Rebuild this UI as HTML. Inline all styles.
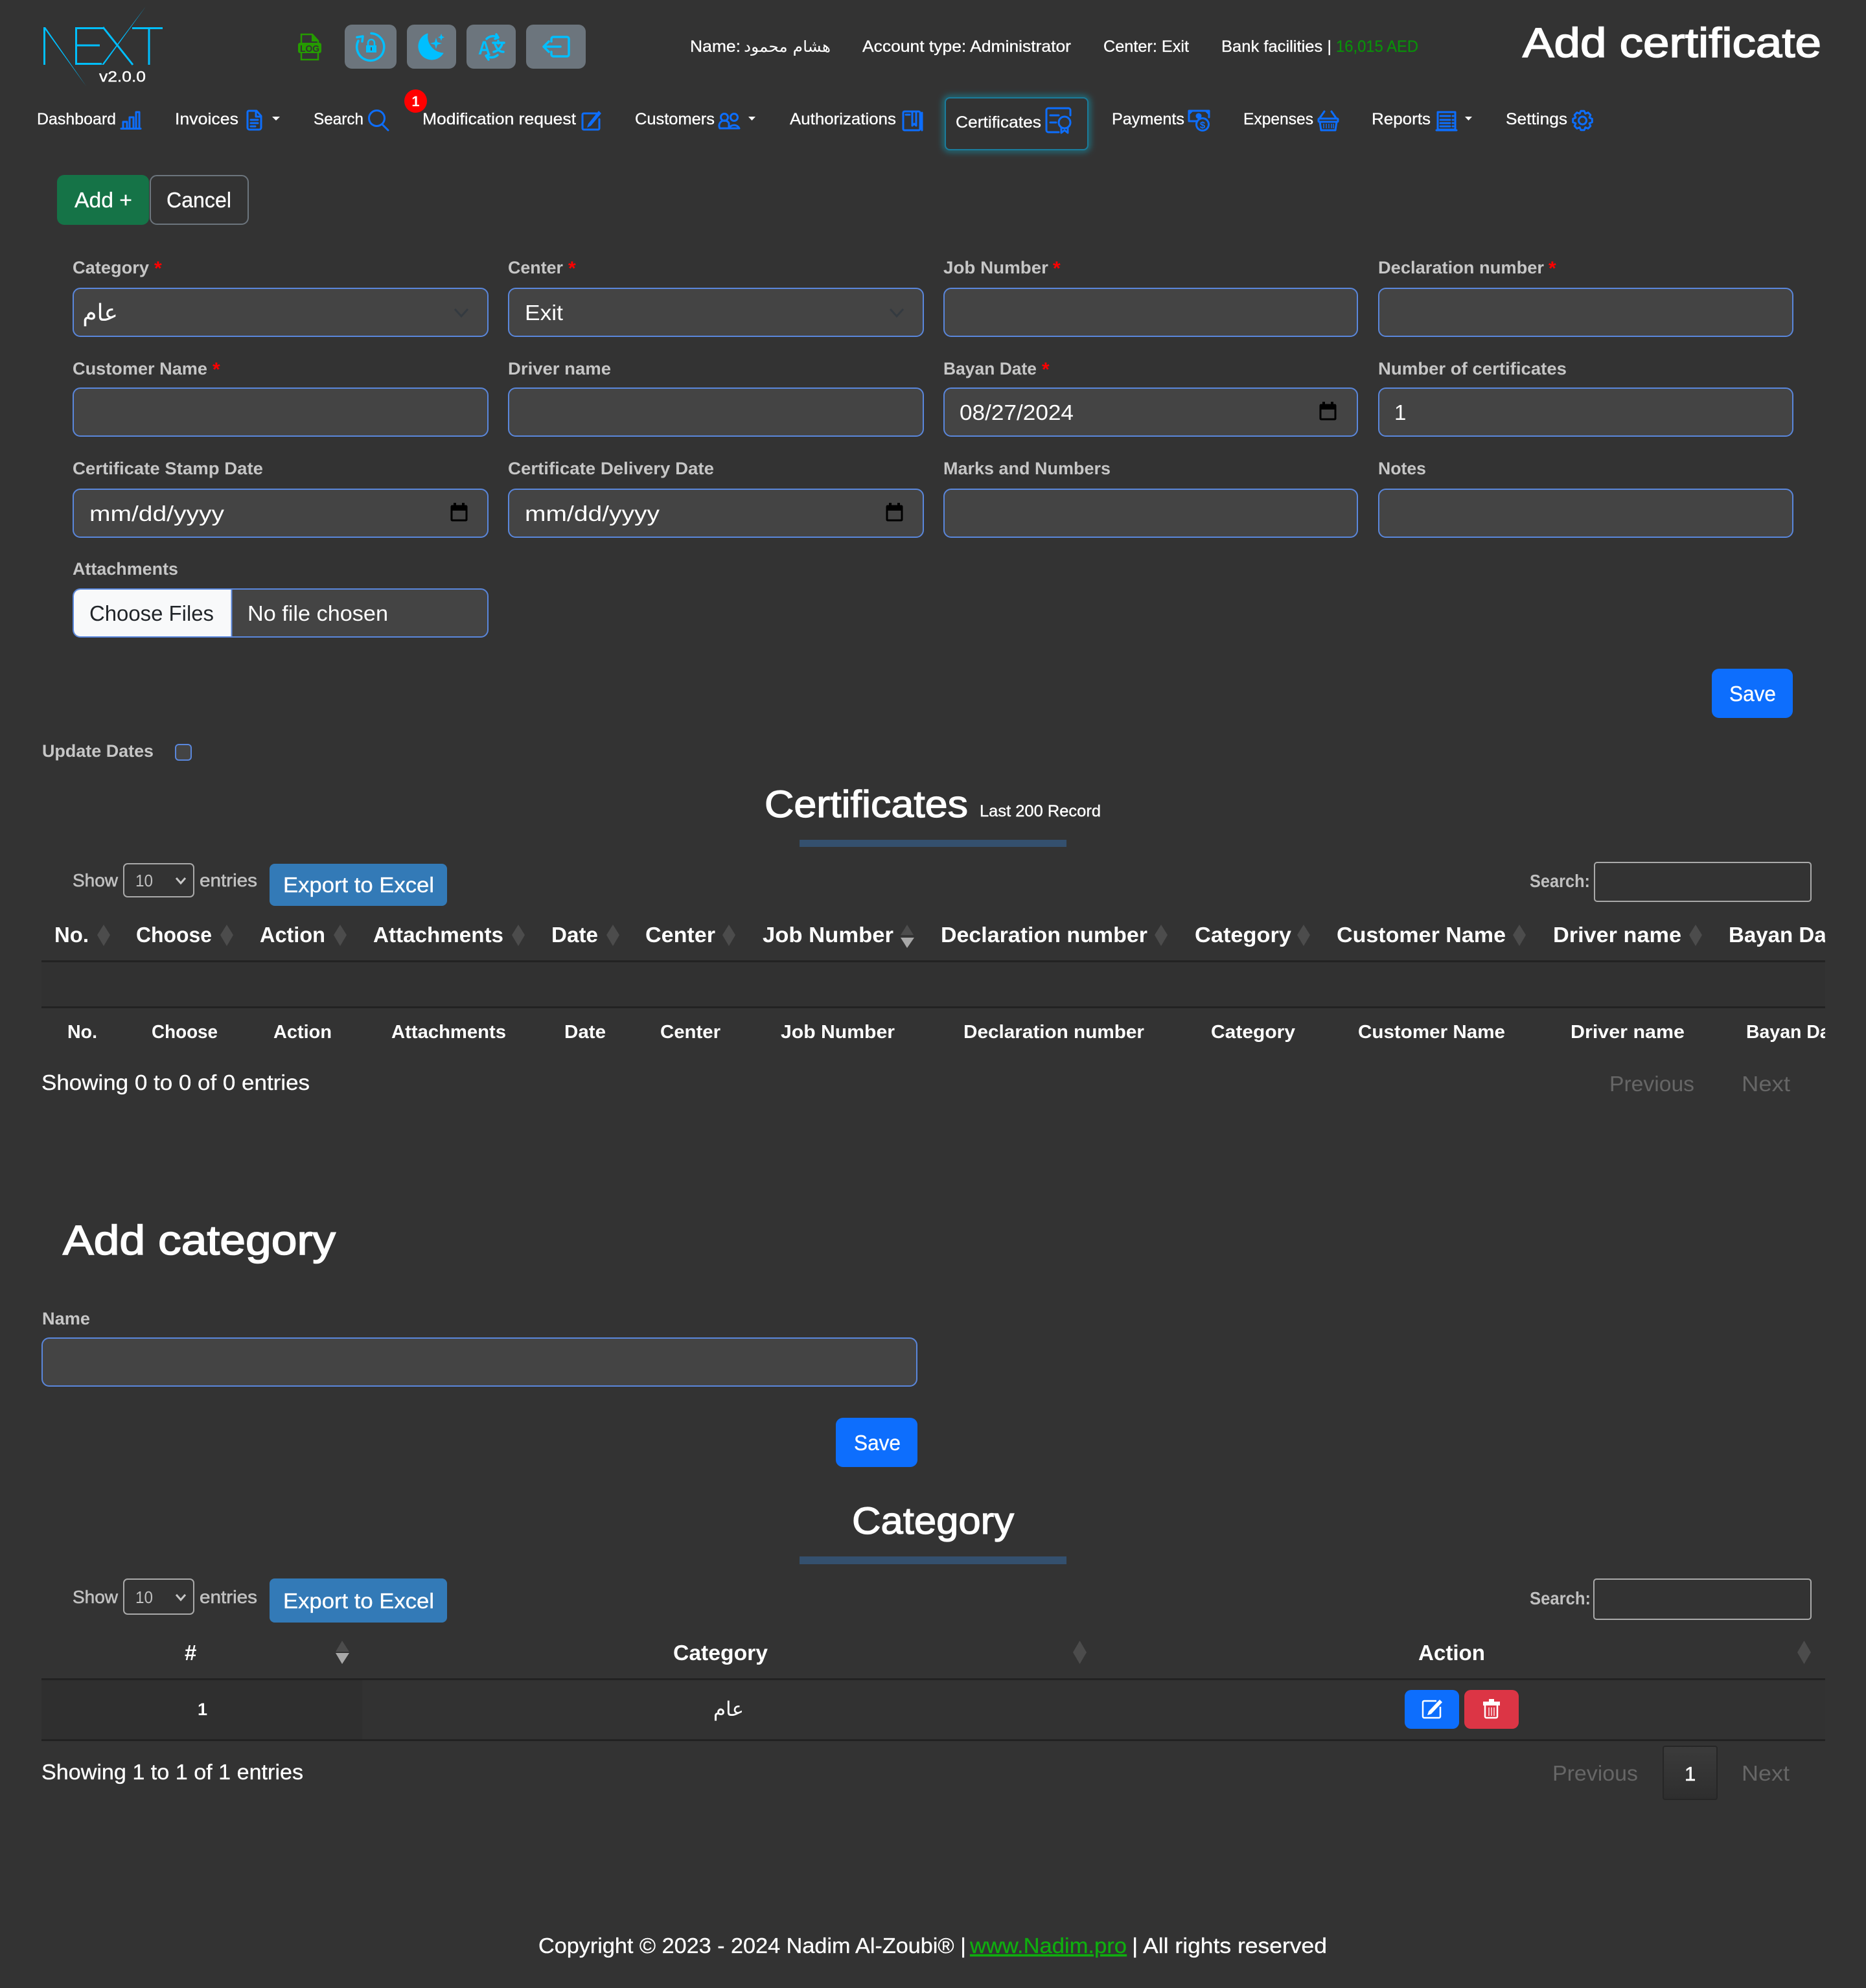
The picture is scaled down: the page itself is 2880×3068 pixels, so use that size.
<!DOCTYPE html>
<html lang="en"><head><meta charset="utf-8"><title>Add certificate</title>
<style>
html,body{margin:0;padding:0;background:#333;width:2880px;height:3068px;overflow:hidden}
svg{display:block}
text{font-family:"Liberation Sans",sans-serif;fill:#fff}
.a{font-family:"DejaVu Sans","Liberation Sans",sans-serif}
.n{font-size:25px;stroke:#fff;stroke-width:.3}
.l{font-size:27px;font-weight:700;fill:#c6c6c6}
.v{font-size:33px}
.b{font-size:33px;stroke:#fff;stroke-width:.3}
.h{font-size:33px;font-weight:700}
.f{font-size:29px;font-weight:700}
.m{font-size:28px;fill:#c0c0c0;stroke:#c0c0c0;stroke-width:.6}
.t{font-size:64px;stroke:#fff;stroke-width:1.6}
.g{font-size:33px;fill:#666}
.s{font-size:30px;font-weight:700;fill:#f00}
.i{fill:none;stroke:#0d6efd;stroke-width:3;stroke-linejoin:round;stroke-linecap:round}
.c{fill:none;stroke:#00bfff;stroke-width:3.5;stroke-linecap:round;stroke-linejoin:round}
.d{fill:#4c4c4c}
.in{fill:#444;stroke:#5a87dc;stroke-width:2}
.sel{fill:#333;stroke:#aaa;stroke-width:2}
</style></head><body>
<svg xmlns="http://www.w3.org/2000/svg" width="2880" height="3068" viewBox="0 0 2880 3068">
<defs>
<clipPath id="tc"><rect x="64" y="1370" width="2753" height="200"/></clipPath>
<clipPath id="tf"><rect x="64" y="1556" width="2753" height="64"/></clipPath>
<filter id="gl" x="-20%" y="-30%" width="140%" height="160%"><feGaussianBlur stdDeviation="5"/></filter>
<linearGradient id="pg" x1="0" y1="0" x2="0" y2="1"><stop offset="0" stop-color="#3b3b3b"/><stop offset="1" stop-color="#2e2e2e"/></linearGradient>
</defs>
<rect width="2880" height="3068" fill="#333"/>

<!-- logo -->
<g fill="none" stroke="#00bfff" stroke-width="3">
<path d="M68.500 42V100"/>
<path d="M117.500 43V99M116 43.500H160M116 70H154M116 98.500H157"/>
<path d="M159 42L205 100"/>
<path d="M204 43.500H251M230 43V100"/>
</g>
<polygon points="67,42 70,42 133,133" fill="#00bfff"/>
<polygon points="225,10 160,100 157,100" fill="#00bfff"/>
<text x="153" y="126" font-size="23" textLength="72" lengthAdjust="spacingAndGlyphs" stroke="#fff" stroke-width=".4">v2.0.0</text>

<!-- log icon -->
<path d="M465 92V53H482L491 63V92Z" fill="none" stroke="#259b00" stroke-width="2.500"/>
<path d="M481 53L491 64H481Z" fill="#259b00"/>
<rect x="460" y="66" width="36" height="16" rx="3" fill="#259b00"/>
<text x="463" y="80" font-size="15" font-weight="700" style="fill:#333" textLength="30" lengthAdjust="spacingAndGlyphs">LOG</text>

<!-- top buttons -->
<g fill="#6c757d">
<rect x="532" y="38" width="80" height="68" rx="11"/>
<rect x="628" y="38" width="76" height="68" rx="11"/>
<rect x="720" y="38" width="76" height="68" rx="11"/>
<rect x="812" y="38" width="92" height="68" rx="11"/>
</g>
<path class="c" stroke-width="3" d="M573 51.500A21 21 0 1 1 553 63"/>
<path class="c" stroke-width="3" d="M551 57.500L560 56L559 64"/>
<path d="M565 70H581V81H565Z" fill="#00bfff"/>
<path d="M568 70V66a5 5 0 0 1 10 0V70" fill="none" stroke="#00bfff" stroke-width="2.500"/>
<rect x="572" y="73" width="2" height="5" fill="#555"/>
<path d="M660 52A20.500 20.500 0 1 0 684 82A26 26 0 0 1 660 52Z" fill="#00bfff" stroke="#00bfff" stroke-width="1" stroke-linejoin="round"/>
<path d="M673 58L675 65L682 67L675 69L673 76L671 69L664 67L671 65Z" fill="#00bfff"/>
<path d="M681 52L682.500 56L686 57.500L682.500 59L681 63L679.500 59L676 57.500L679.500 56Z" fill="#00bfff"/>
<text x="738" y="84" font-size="30" font-weight="700" style="fill:#00bfff" textLength="19" lengthAdjust="spacingAndGlyphs">A</text>
<path class="c" stroke-width="3" d="M761 66H778M769 63V67M764 68C767 77 772 80 777 80M775 68C772 76 767 79 762 80"/>
<path class="c" d="M751 60C756 55 763 55 768 57M766 53L769 58L764 60"/>
<path class="c" d="M768 85C762 90 756 89 751 87M754 92L750 86L755 84"/>
<path class="c" stroke-width="2.500" d="M851 64V60a3 3 0 0 1 3-3H875a3 3 0 0 1 3 3V84a3 3 0 0 1-3 3H854a3 3 0 0 1-3-3V80M865 72H839M847 64L839 72L847 80"/>

<!-- top info -->
<text class="n" x="1065" y="80" textLength="78" lengthAdjust="spacingAndGlyphs">Name:</text>
<text class="a" x="1282" y="80" font-size="24" text-anchor="start" direction="rtl" xml:lang="ar" textLength="134" lengthAdjust="spacingAndGlyphs">هشام محمود</text>
<text class="n" x="1331" y="80" textLength="322" lengthAdjust="spacingAndGlyphs">Account type: Administrator</text>
<text class="n" x="1703" y="80" textLength="132" lengthAdjust="spacingAndGlyphs">Center: Exit</text>
<text class="n" x="1885" y="80" textLength="170" lengthAdjust="spacingAndGlyphs">Bank facilities |</text>
<text class="n" x="2062" y="80" textLength="127" lengthAdjust="spacingAndGlyphs" style="fill:#0a8f0a;stroke:#0a8f0a">16,015 AED</text>
<text class="t" x="2350" y="88" textLength="461" lengthAdjust="spacingAndGlyphs">Add certificate</text>

<!-- nav -->
<text class="n" x="57" y="192" textLength="122" lengthAdjust="spacingAndGlyphs">Dashboard</text>
<path class="i" stroke-width="2.400" d="M187 198.500H217M190 198V188H196V198M200 198V181H206V198M210 198V173H215V198"/>
<text class="n" x="270" y="192" textLength="98" lengthAdjust="spacingAndGlyphs">Invoices</text>
<path class="i" stroke-width="2.600" d="M384 171H396L403 179V197a3 3 0 0 1-3 3H385a3 3 0 0 1-3-3V173a2 2 0 0 1 2-2ZM395 172V180H403M387 185H398M387 190H398M387 195H394"/>
<path d="M420 180H432L426 186Z" fill="#fff"/>
<text class="n" x="484" y="192" textLength="77" lengthAdjust="spacingAndGlyphs">Search</text>
<circle cx="581.500" cy="182.500" r="12" class="i"/>
<path d="M590 192L599 201" class="i" stroke-width="4"/>
<ellipse cx="641.500" cy="156" rx="17.500" ry="18" fill="#f00"/>
<text x="641.500" y="164" font-size="22" font-weight="700" text-anchor="middle">1</text>
<text class="n" x="652" y="192" textLength="237" lengthAdjust="spacingAndGlyphs">Modification request</text>
<path class="i" d="M921 175H901a2 2 0 0 0-2 2V198a2 2 0 0 0 2 2H923a2 2 0 0 0 2-2V184"/>
<path d="M924 171L928 175L912 194L906 197L908 191Z" fill="#0d6efd"/>
<text class="n" x="980" y="192" textLength="123" lengthAdjust="spacingAndGlyphs">Customers</text>
<g class="i" stroke-width="2.200"><circle cx="1118" cy="181" r="5.500"/><circle cx="1133" cy="181" r="5.500"/><path d="M1111 198a8 8 0 0 1 14-8V198ZM1125 198a9 9 0 0 1 16 0Z"/></g>
<path d="M1155 180H1166L1160.500 186Z" fill="#fff"/>
<text class="n" x="1219" y="192" textLength="164" lengthAdjust="spacingAndGlyphs">Authorizations</text>
<g class="i" stroke-width="2"><rect x="1394" y="172" width="26" height="29" rx="2"/><path d="M1408 172V194L1411 191L1414 194V172M1398 177H1404M1423 174V201"/></g>
<!-- active -->
<rect x="1459" y="151" width="220" height="80" rx="7" fill="none" stroke="#0dcaf0" stroke-opacity=".55" stroke-width="6" filter="url(#gl)"/>
<rect x="1459" y="151" width="220" height="80" rx="7" fill="#333" stroke="#1b7c9c" stroke-width="2"/>
<text class="n" x="1475" y="197" textLength="132" lengthAdjust="spacingAndGlyphs">Certificates</text>
<g class="i"><path d="M1634 204H1618a3 3 0 0 1-3-3V170a3 3 0 0 1 3-3H1649a3 3 0 0 1 3 3V178M1621 178H1634M1621 189H1630"/><circle cx="1643" cy="189" r="9"/><path d="M1638 197V205L1643 201L1648 205V197"/></g>
<text class="n" x="1716" y="192" textLength="112" lengthAdjust="spacingAndGlyphs">Payments</text>
<g class="i"><path d="M1848 187H1835V171H1866V181"/><circle cx="1850" cy="179" r="3" fill="#0d6efd"/><circle cx="1856" cy="192" r="9.500"/></g>
<path d="M1835 171H1842L1835 178ZM1866 171H1859L1866 178Z" fill="#0d6efd"/>
<text x="1856" y="198" font-size="15" font-weight="700" text-anchor="middle" style="fill:#0d6efd">$</text>
<text class="n" x="1919" y="192" textLength="108" lengthAdjust="spacingAndGlyphs">Expenses</text>
<g class="i" stroke-width="2.600"><path d="M2044 172L2037 182M2055 172L2062 182"/><rect x="2035" y="183" width="30" height="5" rx="1"/><path d="M2037 188L2039 201H2061L2063 188"/></g>
<path d="M2043 191V198M2047 191V198M2051 191V198M2055 191V198M2058 191V198" stroke="#0d6efd" stroke-width="1.500"/>
<text class="n" x="2117" y="192" textLength="91" lengthAdjust="spacingAndGlyphs">Reports</text>
<g class="i" stroke-width="2.400"><path d="M2219 173H2246V200H2219ZM2217 201H2248"/><path d="M2223 179H2238M2242 179H2243M2223 185H2238M2242 185H2243M2223 190H2238M2242 190H2243M2223 195H2238M2242 195H2243"/></g>
<path d="M2261 180H2272L2266.500 186Z" fill="#fff"/>
<text class="n" x="2324" y="192" textLength="95" lengthAdjust="spacingAndGlyphs">Settings</text>
<g transform="translate(2442.500 186)"><path class="i" stroke-width="2" d="M-2.600-14.800L2.600-14.800L4.400-10.600L8.600-12.300L12.300-8.600L10.600-4.400L14.800-2.600L14.800 2.600L10.600 4.400L12.300 8.600L8.600 12.300L4.400 10.600L2.600 14.800L-2.600 14.800L-4.400 10.600L-8.600 12.300L-12.300 8.600L-10.600 4.400L-14.800 2.600L-14.800-2.600L-10.600-4.400L-12.300-8.600L-8.600-12.300L-4.400-10.600Z"/><circle r="6" class="i" stroke-width="2"/></g>

<!-- Add/Cancel -->
<rect x="88" y="270" width="142" height="77" rx="11" fill="#157347"/>
<rect x="232" y="271" width="151" height="75" rx="10" fill="none" stroke="#6c757d" stroke-width="2"/>
<text class="b" x="115" y="320" textLength="89" lengthAdjust="spacingAndGlyphs">Add +</text>
<text class="b" x="257" y="320" textLength="100" lengthAdjust="spacingAndGlyphs">Cancel</text>

<!-- form row 1 -->
<text class="l" x="112" y="422" textLength="118" lengthAdjust="spacingAndGlyphs">Category</text><text class="s" x="238" y="424">*</text>
<text class="l" x="784" y="422" textLength="85" lengthAdjust="spacingAndGlyphs">Center</text><text class="s" x="877" y="424">*</text>
<text class="l" x="1456" y="422" textLength="162" lengthAdjust="spacingAndGlyphs">Job Number</text><text class="s" x="1625" y="424">*</text>
<text class="l" x="2127" y="422" textLength="256" lengthAdjust="spacingAndGlyphs">Declaration number</text><text class="s" x="2390" y="424">*</text>
<rect class="in" x="113" y="445" width="640" height="74" rx="11"/>
<rect class="in" x="785" y="445" width="640" height="74" rx="11"/>
<rect class="in" x="1457" y="445" width="638" height="74" rx="11"/>
<rect class="in" x="2128" y="445" width="639" height="74" rx="11"/>
<text class="a" x="182" y="495" font-size="36" text-anchor="start" direction="rtl">عام</text>
<path d="M702 477L712 488L722 477" fill="none" stroke="#343a40" stroke-width="3"/>
<text class="v" x="810" y="494" textLength="59" lengthAdjust="spacingAndGlyphs">Exit</text>
<path d="M1374 477L1384 488L1394 477" fill="none" stroke="#343a40" stroke-width="3"/>

<!-- form row 2 -->
<text class="l" x="112" y="578" textLength="208" lengthAdjust="spacingAndGlyphs">Customer Name</text><text class="s" x="328" y="580">*</text>
<text class="l" x="784" y="578" textLength="159" lengthAdjust="spacingAndGlyphs">Driver name</text>
<text class="l" x="1456" y="578" textLength="144" lengthAdjust="spacingAndGlyphs">Bayan Date</text><text class="s" x="1608" y="580">*</text>
<text class="l" x="2127" y="578" textLength="291" lengthAdjust="spacingAndGlyphs">Number of certificates</text>
<rect class="in" x="113" y="599" width="640" height="74" rx="11"/>
<rect class="in" x="785" y="599" width="640" height="74" rx="11"/>
<rect class="in" x="1457" y="599" width="638" height="74" rx="11"/>
<rect class="in" x="2128" y="599" width="639" height="74" rx="11"/>
<text class="v" x="1481" y="648" textLength="176" lengthAdjust="spacingAndGlyphs">08/27/2024</text>
<text class="v" x="2152" y="648">1</text>

<!-- form row 3 -->
<text class="l" x="112" y="732" textLength="294" lengthAdjust="spacingAndGlyphs">Certificate Stamp Date</text>
<text class="l" x="784" y="732" textLength="318" lengthAdjust="spacingAndGlyphs">Certificate Delivery Date</text>
<text class="l" x="1456" y="732" textLength="258" lengthAdjust="spacingAndGlyphs">Marks and Numbers</text>
<text class="l" x="2127" y="732" textLength="74" lengthAdjust="spacingAndGlyphs">Notes</text>
<rect class="in" x="113" y="755" width="640" height="74" rx="11"/>
<rect class="in" x="785" y="755" width="640" height="74" rx="11"/>
<rect class="in" x="1457" y="755" width="638" height="74" rx="11"/>
<rect class="in" x="2128" y="755" width="639" height="74" rx="11"/>
<text class="v" x="138" y="804" textLength="208" lengthAdjust="spacingAndGlyphs">mm/dd/yyyy</text>
<text class="v" x="810" y="804" textLength="208" lengthAdjust="spacingAndGlyphs">mm/dd/yyyy</text>

<!-- calendar icons -->
<g fill="none" stroke="#000" stroke-width="3">
<rect x="697" y="781" width="23" height="22" rx="1"/>
<rect x="1369" y="781" width="23" height="22" rx="1"/>
<rect x="2038" y="625" width="23" height="22" rx="1"/>
</g>
<g fill="#000">
<path d="M696 780H721V788H696ZM700 776H704V781H700ZM713 776H717V781H713Z"/>
<path d="M1368 780H1393V788H1368ZM1372 776H1376V781H1372ZM1385 776H1389V781H1385Z"/>
<path d="M2037 624H2062V632H2037ZM2041 620H2045V625H2041ZM2054 620H2058V625H2054Z"/>
</g>

<!-- attachments -->
<text class="l" x="112" y="887" textLength="163" lengthAdjust="spacingAndGlyphs">Attachments</text>
<rect class="in" x="113" y="909" width="640" height="74" rx="11"/>
<path d="M357 910H124a10 10 0 0 0-10 10V972a10 10 0 0 0 10 10H357Z" fill="#f8f9fa"/>
<path d="M357.500 909V983" stroke="#5a87dc" stroke-width="2"/>
<text class="v" x="138" y="958" textLength="192" lengthAdjust="spacingAndGlyphs" style="fill:#212529">Choose Files</text>
<text class="v" x="382" y="958" textLength="217" lengthAdjust="spacingAndGlyphs">No file chosen</text>

<rect x="2642" y="1032" width="125" height="76" rx="11" fill="#0d6efd"/>
<text class="b" x="2669" y="1082" textLength="72" lengthAdjust="spacingAndGlyphs">Save</text>

<text class="l" x="65" y="1168" textLength="172" lengthAdjust="spacingAndGlyphs">Update Dates</text>
<rect x="271" y="1149" width="24" height="24" rx="5" fill="#444" stroke="#5a87dc" stroke-width="2"/>

<!-- Certificates title -->
<text x="1180" y="1261" font-size="58" textLength="314" lengthAdjust="spacingAndGlyphs" stroke="#fff" stroke-width="1.300">Certificates</text>
<text x="1512" y="1260" font-size="25" textLength="187" lengthAdjust="spacingAndGlyphs" stroke="#fff" stroke-width=".4">Last 200 Record</text>
<rect x="1234" y="1296" width="412" height="11" fill="#34506e"/>

<!-- DT toolbar -->
<text class="m" x="112" y="1368" textLength="70" lengthAdjust="spacingAndGlyphs">Show</text>
<rect class="sel" x="191" y="1333" width="108" height="51" rx="6"/>
<text x="209" y="1368" font-size="26" style="fill:#c0c0c0" textLength="27" lengthAdjust="spacingAndGlyphs">10</text>
<path d="M272 1355L279 1363L286 1355" fill="none" stroke="#c8c8c8" stroke-width="3"/>
<text class="m" x="308" y="1368" textLength="89" lengthAdjust="spacingAndGlyphs">entries</text>
<rect x="416" y="1333" width="274" height="65" rx="8" fill="#337ab7"/>
<text class="b" x="437" y="1377" textLength="233" lengthAdjust="spacingAndGlyphs">Export to Excel</text>
<text class="m" x="2361" y="1369" textLength="93" lengthAdjust="spacingAndGlyphs" style="font-weight:700;stroke:none">Search:</text>
<rect class="sel" x="2461" y="1331" width="334" height="60" rx="4"/>

<!-- table 1 -->
<g clip-path="url(#tc)">
<rect x="64" y="1484" width="2753" height="71" fill="#313131"/>
<rect x="64" y="1482" width="2753" height="3" fill="#222"/>
<rect x="64" y="1553" width="2753" height="3" fill="#222"/>
<text class="h" x="84" y="1454" textLength="53" lengthAdjust="spacingAndGlyphs">No.</text>
<text class="h" x="210" y="1454" textLength="117" lengthAdjust="spacingAndGlyphs">Choose</text>
<text class="h" x="401" y="1454" textLength="101" lengthAdjust="spacingAndGlyphs">Action</text>
<text class="h" x="576" y="1454" textLength="201" lengthAdjust="spacingAndGlyphs">Attachments</text>
<text class="h" x="851" y="1454" textLength="72" lengthAdjust="spacingAndGlyphs">Date</text>
<text class="h" x="996" y="1454" textLength="108" lengthAdjust="spacingAndGlyphs">Center</text>
<text class="h" x="1177" y="1454" textLength="202" lengthAdjust="spacingAndGlyphs">Job Number</text>
<text class="h" x="1452" y="1454" textLength="319" lengthAdjust="spacingAndGlyphs">Declaration number</text>
<text class="h" x="1844" y="1454" textLength="149" lengthAdjust="spacingAndGlyphs">Category</text>
<text class="h" x="2063" y="1454" textLength="261" lengthAdjust="spacingAndGlyphs">Customer Name</text>
<text class="h" x="2397" y="1454" textLength="198" lengthAdjust="spacingAndGlyphs">Driver name</text>
<text class="h" x="2668" y="1454" textLength="180" lengthAdjust="spacingAndGlyphs">Bayan Date</text>
<g class="d">
<path d="M160 1427L170 1443L160 1460L150 1443Z"/>
<path d="M350 1427L360 1443L350 1460L340 1443Z"/>
<path d="M525 1427L535 1443L525 1460L515 1443Z"/>
<path d="M800 1427L810 1443L800 1460L790 1443Z"/>
<path d="M946 1427L956 1443L946 1460L936 1443Z"/>
<path d="M1125 1427L1135 1443L1125 1460L1115 1443Z"/>
<path d="M1400 1427L1410 1443H1390Z"/>
<path d="M1792 1427L1802 1443L1792 1460L1782 1443Z"/>
<path d="M2012 1427L2022 1443L2012 1460L2002 1443Z"/>
<path d="M2345 1427L2355 1443L2345 1460L2335 1443Z"/>
<path d="M2617 1427L2627 1443L2617 1460L2607 1443Z"/>
</g>
<path d="M1390 1447H1411L1400 1463Z" fill="#a8a8a8"/>
</g>
<g clip-path="url(#tf)">
<text class="f" x="104" y="1602" textLength="46" lengthAdjust="spacingAndGlyphs">No.</text>
<text class="f" x="234" y="1602" textLength="102" lengthAdjust="spacingAndGlyphs">Choose</text>
<text class="f" x="422" y="1602" textLength="90" lengthAdjust="spacingAndGlyphs">Action</text>
<text class="f" x="604" y="1602" textLength="177" lengthAdjust="spacingAndGlyphs">Attachments</text>
<text class="f" x="871" y="1602" textLength="64" lengthAdjust="spacingAndGlyphs">Date</text>
<text class="f" x="1019" y="1602" textLength="93" lengthAdjust="spacingAndGlyphs">Center</text>
<text class="f" x="1205" y="1602" textLength="176" lengthAdjust="spacingAndGlyphs">Job Number</text>
<text class="f" x="1487" y="1602" textLength="279" lengthAdjust="spacingAndGlyphs">Declaration number</text>
<text class="f" x="1869" y="1602" textLength="130" lengthAdjust="spacingAndGlyphs">Category</text>
<text class="f" x="2096" y="1602" textLength="227" lengthAdjust="spacingAndGlyphs">Customer Name</text>
<text class="f" x="2424" y="1602" textLength="176" lengthAdjust="spacingAndGlyphs">Driver name</text>
<text class="f" x="2695" y="1602" textLength="155" lengthAdjust="spacingAndGlyphs">Bayan Date</text>
</g>
<text class="b" x="64" y="1682" textLength="414" lengthAdjust="spacingAndGlyphs">Showing 0 to 0 of 0 entries</text>
<text class="g" x="2484" y="1684" textLength="131" lengthAdjust="spacingAndGlyphs">Previous</text>
<text class="g" x="2688" y="1684" textLength="75" lengthAdjust="spacingAndGlyphs">Next</text>

<!-- Add category -->
<text class="t" x="97" y="1936" textLength="421" lengthAdjust="spacingAndGlyphs">Add category</text>
<text class="l" x="65" y="2044" textLength="74" lengthAdjust="spacingAndGlyphs">Name</text>
<rect class="in" x="65" y="2065" width="1350" height="74" rx="11"/>
<rect x="1290" y="2188" width="126" height="76" rx="11" fill="#0d6efd"/>
<text class="b" x="1318" y="2238" textLength="72" lengthAdjust="spacingAndGlyphs">Save</text>

<text x="1315" y="2367" font-size="58" textLength="250" lengthAdjust="spacingAndGlyphs" stroke="#fff" stroke-width="1.300">Category</text>
<rect x="1234" y="2402" width="412" height="12" fill="#34506e"/>

<text class="m" x="112" y="2474" textLength="70" lengthAdjust="spacingAndGlyphs">Show</text>
<rect class="sel" x="191" y="2437" width="108" height="54" rx="6"/>
<text x="209" y="2474" font-size="26" style="fill:#c0c0c0" textLength="27" lengthAdjust="spacingAndGlyphs">10</text>
<path d="M272 2461L279 2469L286 2461" fill="none" stroke="#c8c8c8" stroke-width="3"/>
<text class="m" x="308" y="2474" textLength="89" lengthAdjust="spacingAndGlyphs">entries</text>
<rect x="416" y="2436" width="274" height="68" rx="8" fill="#337ab7"/>
<text class="b" x="437" y="2482" textLength="233" lengthAdjust="spacingAndGlyphs">Export to Excel</text>
<text class="m" x="2361" y="2476" textLength="94" lengthAdjust="spacingAndGlyphs" style="font-weight:700;stroke:none">Search:</text>
<rect class="sel" x="2460" y="2437" width="335" height="62" rx="4"/>

<!-- table 2 -->
<text class="h" x="285" y="2562">#</text>
<text class="h" x="1039" y="2562" textLength="146" lengthAdjust="spacingAndGlyphs">Category</text>
<text class="h" x="2189" y="2562" textLength="103" lengthAdjust="spacingAndGlyphs">Action</text>
<path d="M528 2532L539 2549H518Z" fill="#4c4c4c"/>
<path d="M518 2551H539L528 2568Z" fill="#a8a8a8"/>
<path d="M1666.500 2532L1677 2550L1666.500 2568L1656 2550Z" fill="#4c4c4c"/>
<path d="M2784.500 2532L2795 2550L2784.500 2568L2774 2550Z" fill="#4c4c4c"/>
<rect x="559" y="2592" width="2258" height="92" fill="#323232"/>
<rect x="64" y="2592" width="495" height="92" fill="#2f2f2f"/>
<rect x="64" y="2590" width="2753" height="3" fill="#222"/>
<rect x="64" y="2684" width="2753" height="3" fill="#222"/>
<text x="305" y="2647" font-size="27" font-weight="700">1</text>
<text class="a" x="1148" y="2648" font-size="31" text-anchor="start" direction="rtl">عام</text>
<rect x="2168" y="2608" width="84" height="60" rx="10" fill="#0d6efd"/>
<rect x="2260" y="2608" width="84" height="60" rx="10" fill="#dc3545"/>
<g fill="none" stroke="#fff" stroke-width="2.500">
<path d="M2217 2625H2198a2 2 0 0 0-2 2V2649a2 2 0 0 0 2 2H2221a2 2 0 0 0 2-2V2634"/>
</g>
<path d="M2222 2623L2226 2627L2209 2645L2203 2647L2205 2641Z" fill="#fff"/>
<g fill="none" stroke="#fff" stroke-width="2.500">
<path d="M2292 2632V2649a2 2 0 0 0 2 2H2309a2 2 0 0 0 2-2V2632"/>
</g>
<path d="M2289 2626H2315V2632H2289ZM2298 2622H2306V2626H2298Z" fill="#fff"/>
<path d="M2298 2635V2648M2302 2635V2648M2306 2635V2648" stroke="#fff" stroke-width="1.300"/>

<text class="b" x="64" y="2746" textLength="404" lengthAdjust="spacingAndGlyphs">Showing 1 to 1 of 1 entries</text>
<text class="g" x="2396" y="2748" textLength="132" lengthAdjust="spacingAndGlyphs">Previous</text>
<rect x="2567" y="2695" width="83" height="82" rx="3" fill="url(#pg)" stroke="#262626" stroke-width="2"/>
<text x="2600" y="2748" font-size="31" font-weight="400" stroke="#fff" stroke-width=".6">1</text>
<text class="g" x="2688" y="2748" textLength="74" lengthAdjust="spacingAndGlyphs">Next</text>

<!-- footer -->
<text class="b" x="831" y="3014" textLength="660" lengthAdjust="spacingAndGlyphs">Copyright © 2023 - 2024 Nadim Al-Zoubi® |</text>
<text class="b" x="1497" y="3014" textLength="242" lengthAdjust="spacingAndGlyphs" text-decoration="underline" style="fill:#0fae0f;stroke:#0fae0f">www.Nadim.pro</text>
<text class="b" x="1747" y="3014" textLength="301" lengthAdjust="spacingAndGlyphs">| All rights reserved</text>
</svg>
</body></html>
